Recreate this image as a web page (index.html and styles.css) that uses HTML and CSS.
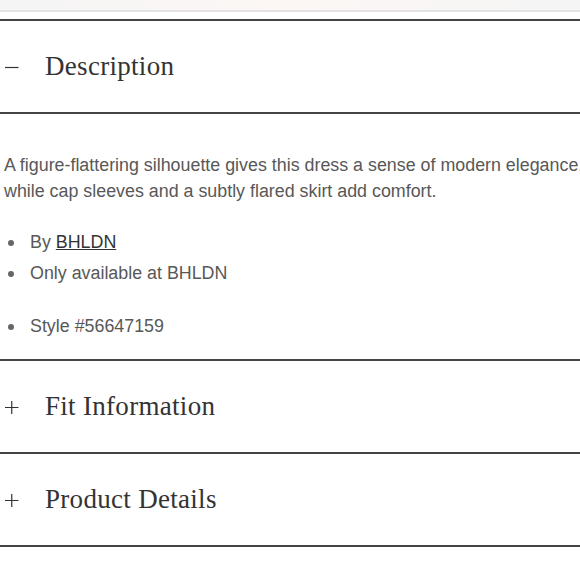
FILE: index.html
```html
<!DOCTYPE html>
<html>
<head>
<meta charset="utf-8">
<link rel="stylesheet" href="styles.css">
</head>
<body>
<div class="topbar"></div>
<div class="topline"></div>
<div class="accordion">
  <div class="acc-head">
    <span class="acc-icon"><svg width="14" height="14" viewBox="0 0 14 14"><path d="M0 7.5H13.5" stroke="#333" stroke-width="1.2" fill="none"/></svg></span>
    <span class="acc-title">Description</span>
  </div>
  <div class="acc-body">
    <p class="desc">A figure-flattering silhouette gives this dress a sense of modern elegance, while cap sleeves and a subtly flared skirt add comfort.</p>
    <ul class="facts">
      <li>By <a class="brand" href="#">BHLDN</a></li>
      <li>Only available at BHLDN</li>
      <li class="style-no">Style #56647159</li>
    </ul>
  </div>
  <div class="acc-head">
    <span class="acc-icon"><svg width="14" height="14" viewBox="0 0 14 14"><path d="M0 7.5H13.5M6.75 1V14" stroke="#333" stroke-width="1.2" fill="none"/></svg></span>
    <span class="acc-title">Fit Information</span>
  </div>
  <div class="acc-head">
    <span class="acc-icon"><svg width="14" height="14" viewBox="0 0 14 14"><path d="M0 7.5H13.5M6.75 1V14" stroke="#333" stroke-width="1.2" fill="none"/></svg></span>
    <span class="acc-title">Product Details</span>
  </div>
</div>
</body>
</html>
```

FILE: styles.css
```css
html, body {
  margin: 0;
  padding: 0;
  background: #ffffff;
  overflow: hidden;
}
body {
  width: 580px;
}
.topbar {
  height: 10px;
  background: linear-gradient(90deg, #f5f5f5 0%, #fcf7f5 50%, #f5f5f5 100%);
}
.topline {
  height: 2px;
  background: #e3e3e3;
  margin-bottom: 7px;
}
.accordion {
  border-top: 2px solid #444444;
  width: 620px;
}
.acc-head {
  height: 91px;
  border-bottom: 2px solid #444444;
  display: flex;
  align-items: center;
  font-family: "Liberation Serif", "Times New Roman", serif;
  color: #333333;
}
.acc-icon {
  width: 45px;
  padding-left: 5px;
  box-sizing: border-box;
  display: flex;
  align-items: center;
  margin-top: 1px;
}
.acc-title {
  font-size: 27px;
  letter-spacing: 0.3px;
  line-height: 1;
}
.acc-body {
  border-bottom: 2px solid #444444;
  padding: 38px 0 0 4px;
  height: 247px;
  box-sizing: border-box;
  font-family: "Liberation Sans", Arial, sans-serif;
  color: #585858;
  font-size: 17.85px;
}
.desc {
  margin: 0;
  width: 600px;
  line-height: 26px;
}
.facts {
  margin: 23px 0 0 0;
  padding-left: 26px;
  list-style: none;
  line-height: 31px;
}
.facts li {
  position: relative;
}
.facts li::before {
  content: "";
  position: absolute;
  left: -22px;
  top: 13px;
  width: 6px;
  height: 6px;
  border-radius: 50%;
  background: #666666;
}
.style-no {
  margin-top: 22px;
}
.brand {
  color: #333333;
  text-decoration: underline;
}
```
